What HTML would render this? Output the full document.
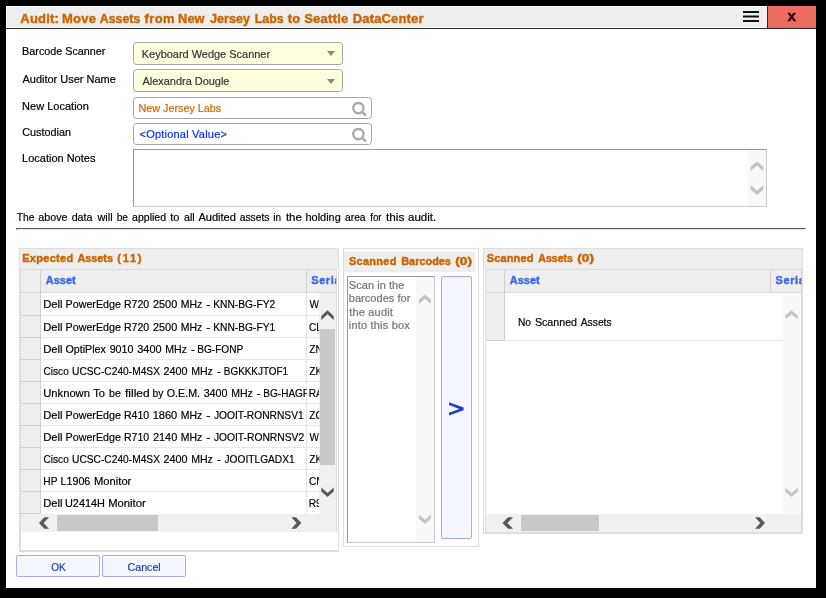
<!DOCTYPE html>
<html><head><meta charset="utf-8"><title>Audit</title>
<style>
html,body{margin:0;padding:0;background:#000;}
body{width:826px;height:598px;position:relative;overflow:hidden;font-family:'Liberation Sans', sans-serif;}
.t{position:absolute;white-space:pre;line-height:16px;height:16px;font-family:'Liberation Sans', sans-serif;}
.a{position:absolute;box-sizing:border-box;}
</style></head><body>
<div class="a" style="left:6px;top:6px;width:810px;height:582px;background:#fff;"></div>
<div class="a" style="left:7px;top:7px;width:760px;height:20px;background:#eeeeee;"></div>
<div class="a" style="left:6px;top:28px;width:810px;height:1px;background:#2a2a2a;"></div>
<div class="a" style="left:767px;top:6px;width:1px;height:23px;background:#2a2a2a;"></div>
<div class="a" style="left:768px;top:6px;width:48px;height:22px;background:#ed6c61;"></div>
<svg class="a" style="left:743px;top:10px" width="17" height="13" viewBox="0 0 17 13"><rect x="0" y="1" width="16" height="2" fill="#111"/><rect x="0" y="5.5" width="16" height="2" fill="#111"/><rect x="0" y="10" width="16" height="2" fill="#111"/></svg>
<div class="a" style="left:133px;top:42px;width:210px;height:23px;background:#ffffdf;border:1px solid #a6a6a6;border-radius:3.5px;"></div>
<svg class="a" style="left:327px;top:51px" width="8" height="5" viewBox="0 0 8 5"><path d="M0 0H8L4 5Z" fill="#888"/></svg>
<div class="a" style="left:133px;top:69px;width:210px;height:23px;background:#ffffdf;border:1px solid #a6a6a6;border-radius:3.5px;"></div>
<svg class="a" style="left:327px;top:79px" width="8" height="5" viewBox="0 0 8 5"><path d="M0 0H8L4 5Z" fill="#888"/></svg>
<div class="a" style="left:133px;top:97px;width:239px;height:22px;background:#fff;border:1px solid #a6a6a6;border-radius:3.5px;"></div>
<svg class="a" style="left:351px;top:102px" width="17" height="16" viewBox="0 0 17 16"><circle cx="7.4" cy="6.1" r="5.15" fill="none" stroke="#aaa" stroke-width="2.4"/><path d="M11.3 10.1L14.3 12.8" stroke="#aaa" stroke-width="2.5" stroke-linecap="round"/></svg>
<div class="a" style="left:133px;top:123px;width:239px;height:22px;background:#fff;border:1px solid #a6a6a6;border-radius:3.5px;"></div>
<svg class="a" style="left:351px;top:128px" width="17" height="16" viewBox="0 0 17 16"><circle cx="7.4" cy="6.1" r="5.15" fill="none" stroke="#aaa" stroke-width="2.4"/><path d="M11.3 10.1L14.3 12.8" stroke="#aaa" stroke-width="2.5" stroke-linecap="round"/></svg>
<div class="a" style="left:133px;top:149px;width:634px;height:58px;background:#fff;border:1px solid #ccc;border-top-color:#999;border-left-color:#999;"></div>
<div class="a" style="left:748px;top:150px;width:18px;height:56px;background:#f8f8f8;"></div>
<svg class="a" style="left:749px;top:160px" width="16" height="12" viewBox="0 0 16 12"><path d="M1.70 6.78L8.00 1.40L14.30 6.78L14.30 11.00L8.00 5.62L1.70 11.00Z" fill="#c2c2c2"/></svg>
<svg class="a" style="left:749px;top:184px" width="16" height="12" viewBox="0 0 16 12"><path d="M1.70 5.47L8.00 10.90L14.30 5.47L14.30 1.20L8.00 6.63L1.70 1.20Z" fill="#c2c2c2"/></svg>
<div class="a" style="left:16px;top:228px;width:790px;height:2px;border-top:1px solid #5a5a5a;border-left:1px solid #5a5a5a;border-bottom:1px solid #e6e6e6;border-right:1px solid #e6e6e6;"></div>
<div class="a" style="left:19px;top:248px;width:320px;height:304px;background:#fff;border:1px solid #ddd;border-left-width:2px;border-bottom-width:2px;"></div>
<div class="a" style="left:20px;top:249px;width:318px;height:20px;background:#eeeeee;"></div>
<div class="a" style="left:21px;top:269px;width:315px;height:24px;background:#eeeeee;"></div>
<div class="a" style="left:336px;top:269px;width:1px;height:263px;background:#ddd;"></div>
<div class="a" style="left:21px;top:269px;width:315px;height:1px;background:#dadada;"></div>
<div class="a" style="left:21px;top:292px;width:315px;height:1px;background:#dadada;"></div>
<div class="a" style="left:40px;top:270px;width:1px;height:23px;background:#d0d0d0;"></div>
<div class="a" style="left:306px;top:270px;width:1px;height:23px;background:#d0d0d0;"></div>
<div class="a" style="left:21px;top:293px;width:19px;height:221px;background:#eeeeee;"></div>
<div class="a" style="left:40px;top:293px;width:1px;height:221px;background:#d0d0d0;"></div>
<div class="a" style="left:306px;top:293px;width:1px;height:221px;background:#e4e4e4;"></div>
<div class="a" style="left:41px;top:315px;width:278px;height:1px;background:#e8e8e8;"></div>
<div class="a" style="left:21px;top:315px;width:20px;height:1px;background:#d0d0d0;"></div>
<div class="a" style="left:41px;top:337px;width:278px;height:1px;background:#e8e8e8;"></div>
<div class="a" style="left:21px;top:337px;width:20px;height:1px;background:#d0d0d0;"></div>
<div class="a" style="left:41px;top:359px;width:278px;height:1px;background:#e8e8e8;"></div>
<div class="a" style="left:21px;top:359px;width:20px;height:1px;background:#d0d0d0;"></div>
<div class="a" style="left:41px;top:381px;width:278px;height:1px;background:#e8e8e8;"></div>
<div class="a" style="left:21px;top:381px;width:20px;height:1px;background:#d0d0d0;"></div>
<div class="a" style="left:41px;top:403px;width:278px;height:1px;background:#e8e8e8;"></div>
<div class="a" style="left:21px;top:403px;width:20px;height:1px;background:#d0d0d0;"></div>
<div class="a" style="left:41px;top:425px;width:278px;height:1px;background:#e8e8e8;"></div>
<div class="a" style="left:21px;top:425px;width:20px;height:1px;background:#d0d0d0;"></div>
<div class="a" style="left:41px;top:447px;width:278px;height:1px;background:#e8e8e8;"></div>
<div class="a" style="left:21px;top:447px;width:20px;height:1px;background:#d0d0d0;"></div>
<div class="a" style="left:41px;top:469px;width:278px;height:1px;background:#e8e8e8;"></div>
<div class="a" style="left:21px;top:469px;width:20px;height:1px;background:#d0d0d0;"></div>
<div class="a" style="left:41px;top:491px;width:278px;height:1px;background:#e8e8e8;"></div>
<div class="a" style="left:21px;top:491px;width:20px;height:1px;background:#d0d0d0;"></div>
<div class="a" style="left:21px;top:513px;width:20px;height:1px;background:#d0d0d0;"></div>
<div class="a" style="left:319px;top:293px;width:17px;height:221px;background:#f0f0f0;"></div>
<div class="a" style="left:320px;top:329px;width:15px;height:136px;background:#c8c8c8;"></div>
<svg class="a" style="left:320px;top:309px" width="15" height="12" viewBox="0 0 15 12"><path d="M1.30 6.93L7.50 1.30L13.70 6.93L13.70 11.00L7.50 5.37L1.30 11.00Z" fill="#5a5a5a"/></svg>
<svg class="a" style="left:320px;top:486px" width="15" height="13" viewBox="0 0 15 13"><path d="M1.30 5.47L7.50 11.10L13.70 5.47L13.70 1.40L7.50 7.03L1.30 1.40Z" fill="#5a5a5a"/></svg>
<div class="a" style="left:21px;top:514px;width:315px;height:18px;background:#f0f0f0;"></div>
<div class="a" style="left:57px;top:515px;width:101px;height:16px;background:#c8c8c8;"></div>
<svg class="a" style="left:38px;top:516px" width="12" height="14" viewBox="0 0 12 14"><path d="M11.00 1.20L6.30 1.20L1.00 7.00L6.30 12.80L11.00 12.80L5.70 7.00Z" fill="#595959"/></svg>
<svg class="a" style="left:290px;top:516px" width="13" height="14" viewBox="0 0 13 14"><path d="M1.30 1.20L6.00 1.20L11.30 7.00L6.00 12.80L1.30 12.80L6.60 7.00Z" fill="#595959"/></svg>
<div class="a" style="left:343px;top:248px;width:136px;height:299px;background:#fff;border:1px solid #ddd;"></div>
<div class="a" style="left:344px;top:252px;width:131px;height:20px;background:#eeeeee;"></div>
<div class="a" style="left:347px;top:276px;width:88px;height:267px;background:#fff;border:1px solid #ccc;border-top-color:#9a9a9a;border-left-color:#9a9a9a;"></div>
<div class="a" style="left:416px;top:277px;width:18px;height:265px;background:#f8f8f8;"></div>
<svg class="a" style="left:417px;top:293px" width="15" height="12" viewBox="0 0 15 12"><path d="M1.90 6.82L7.95 1.50L14.00 6.82L14.00 11.00L7.95 5.68L1.90 11.00Z" fill="#c4c4c4"/></svg>
<svg class="a" style="left:417px;top:513px" width="15" height="12" viewBox="0 0 15 12"><path d="M1.90 5.68L7.95 11.00L14.00 5.68L14.00 1.50L7.95 6.82L1.90 1.50Z" fill="#c4c4c4"/></svg>
<div class="a" style="left:441px;top:276px;width:31px;height:263px;background:#f4f7ff;border:1px solid #a8a8ff;border-radius:2px;"></div>
<svg class="a" style="left:446px;top:399px" width="20" height="20" viewBox="0 0 20 20"><path d="M3 3.2L17.6 8.6V11.2L3 16.6V13.7L13.4 9.9L3 6.1Z" fill="#2040c0"/></svg>
<div class="a" style="left:483px;top:248px;width:320px;height:286px;background:#fff;border:1px solid #ddd;border-bottom-width:2px;"></div>
<div class="a" style="left:484px;top:249px;width:318px;height:20px;background:#eeeeee;"></div>
<div class="a" style="left:486px;top:269px;width:315px;height:24px;background:#eeeeee;"></div>
<div class="a" style="left:485px;top:269px;width:1px;height:264px;background:#ddd;"></div>
<div class="a" style="left:801px;top:269px;width:1px;height:264px;background:#ddd;"></div>
<div class="a" style="left:486px;top:269px;width:315px;height:1px;background:#dadada;"></div>
<div class="a" style="left:486px;top:292px;width:315px;height:1px;background:#dadada;"></div>
<div class="a" style="left:504px;top:270px;width:1px;height:23px;background:#d0d0d0;"></div>
<div class="a" style="left:770px;top:270px;width:1px;height:23px;background:#d0d0d0;"></div>
<div class="a" style="left:486px;top:293px;width:18px;height:47px;background:#eeeeee;"></div>
<div class="a" style="left:504px;top:293px;width:1px;height:48px;background:#d0d0d0;"></div>
<div class="a" style="left:505px;top:340px;width:278px;height:1px;background:#e8e8e8;"></div>
<div class="a" style="left:486px;top:340px;width:19px;height:1px;background:#d0d0d0;"></div>
<div class="a" style="left:783px;top:293px;width:18px;height:221px;background:#f8f8f8;"></div>
<svg class="a" style="left:784px;top:309px" width="15" height="12" viewBox="0 0 15 12"><path d="M1.30 6.51L7.50 1.30L13.70 6.51L13.70 10.60L7.50 5.39L1.30 10.60Z" fill="#c4c4c4"/></svg>
<svg class="a" style="left:784px;top:486px" width="15" height="12" viewBox="0 0 15 12"><path d="M1.30 5.85L7.50 11.00L13.70 5.85L13.70 1.80L7.50 6.95L1.30 1.80Z" fill="#c4c4c4"/></svg>
<div class="a" style="left:486px;top:514px;width:315px;height:18px;background:#f0f0f0;"></div>
<div class="a" style="left:521px;top:515px;width:78px;height:16px;background:#c8c8c8;"></div>
<svg class="a" style="left:501px;top:516px" width="13" height="14" viewBox="0 0 13 14"><path d="M12.00 1.20L7.07 1.20L1.50 7.00L7.07 12.80L12.00 12.80L6.43 7.00Z" fill="#595959"/></svg>
<svg class="a" style="left:754px;top:516px" width="12" height="14" viewBox="0 0 12 14"><path d="M1.00 1.20L5.70 1.20L11.00 7.00L5.70 12.80L1.00 12.80L6.30 7.00Z" fill="#595959"/></svg>
<div class="a" style="left:16px;top:555px;width:84px;height:22px;background:#f4f7ff;border:1px solid #a8a8ff;border-radius:2px;"></div>
<div class="a" style="left:102px;top:555px;width:84px;height:22px;background:#f4f7ff;border:1px solid #a8a8ff;border-radius:2px;"></div>
<div style="position:absolute;left:0;top:0;width:826px;height:598px;will-change:transform">
<div class="t" style="left:0;top:11px;font-size:13px;color:#cc6600;letter-spacing:0.220px;font-weight:bold;-webkit-text-stroke:0.45px #cc6600;transform:translateX(20.30px);transform-origin:0 0;">Audit:</div>
<div class="t" style="left:0;top:11px;font-size:13px;color:#cc6600;letter-spacing:0.267px;font-weight:bold;-webkit-text-stroke:0.45px #cc6600;transform:translateX(62.00px);transform-origin:0 0;">Move</div>
<div class="t" style="left:0;top:11px;font-size:13px;color:#cc6600;font-weight:bold;-webkit-text-stroke:0.45px #cc6600;transform:translateX(99.80px) scaleX(0.9506);transform-origin:0 0;">Assets</div>
<div class="t" style="left:0;top:11px;font-size:13px;color:#cc6600;letter-spacing:0.350px;font-weight:bold;-webkit-text-stroke:0.45px #cc6600;transform:translateX(144.60px);transform-origin:0 0;">from</div>
<div class="t" style="left:0;top:11px;font-size:13px;color:#cc6600;font-weight:bold;-webkit-text-stroke:0.45px #cc6600;transform:translateX(178.11px) scaleX(0.9887);transform-origin:0 0;">New</div>
<div class="t" style="left:0;top:11px;font-size:13px;color:#cc6600;font-weight:bold;-webkit-text-stroke:0.45px #cc6600;transform:translateX(209.90px) scaleX(0.9735);transform-origin:0 0;">Jersey</div>
<div class="t" style="left:0;top:11px;font-size:13px;color:#cc6600;font-weight:bold;-webkit-text-stroke:0.45px #cc6600;transform:translateX(254.83px) scaleX(0.9458);transform-origin:0 0;">Labs</div>
<div class="t" style="left:0;top:11px;font-size:13px;color:#cc6600;font-weight:bold;-webkit-text-stroke:0.45px #cc6600;transform:translateX(287.80px) scaleX(1.0000);transform-origin:0 0;">to</div>
<div class="t" style="left:0;top:11px;font-size:13px;color:#cc6600;letter-spacing:0.250px;font-weight:bold;-webkit-text-stroke:0.45px #cc6600;transform:translateX(304.20px);transform-origin:0 0;">Seattle</div>
<div class="t" style="left:0;top:11px;font-size:13px;color:#cc6600;letter-spacing:0.144px;font-weight:bold;-webkit-text-stroke:0.45px #cc6600;transform:translateX(352.80px);transform-origin:0 0;">DataCenter</div>
<div class="t" style="left:0;top:43px;font-size:11px;color:#000;-webkit-text-stroke:0.2px #000;transform:translateX(22.12px) scaleX(0.9792);transform-origin:0 0;">Barcode Scanner</div>
<div class="t" style="left:0;top:71px;font-size:11px;color:#000;-webkit-text-stroke:0.2px #000;transform:translateX(22.50px) scaleX(0.9973);transform-origin:0 0;">Auditor User Name</div>
<div class="t" style="left:0;top:98px;font-size:11px;color:#000;letter-spacing:0.009px;-webkit-text-stroke:0.2px #000;transform:translateX(22.10px);transform-origin:0 0;">New Location</div>
<div class="t" style="left:0;top:124px;font-size:11px;color:#000;-webkit-text-stroke:0.2px #000;transform:translateX(22.21px) scaleX(0.9856);transform-origin:0 0;">Custodian</div>
<div class="t" style="left:0;top:150px;font-size:11px;color:#000;-webkit-text-stroke:0.2px #000;transform:translateX(22.10px) scaleX(0.9986);transform-origin:0 0;">Location Notes</div>
<div class="t" style="left:0;top:209px;font-size:11px;color:#000;-webkit-text-stroke:0.2px #000;transform:translateX(16.70px) scaleX(0.9351);transform-origin:0 0;">The</div>
<div class="t" style="left:0;top:209px;font-size:11px;color:#000;-webkit-text-stroke:0.2px #000;transform:translateX(38.36px) scaleX(0.9729);transform-origin:0 0;">above</div>
<div class="t" style="left:0;top:209px;font-size:11px;color:#000;-webkit-text-stroke:0.2px #000;transform:translateX(71.66px) scaleX(0.9741);transform-origin:0 0;">data</div>
<div class="t" style="left:0;top:209px;font-size:11px;color:#000;-webkit-text-stroke:0.2px #000;transform:translateX(97.45px) scaleX(0.9933);transform-origin:0 0;">will</div>
<div class="t" style="left:0;top:209px;font-size:11px;color:#000;-webkit-text-stroke:0.2px #000;transform:translateX(116.64px) scaleX(0.9217);transform-origin:0 0;">be</div>
<div class="t" style="left:0;top:209px;font-size:11px;color:#000;-webkit-text-stroke:0.2px #000;transform:translateX(132.06px) scaleX(0.9583);transform-origin:0 0;">applied</div>
<div class="t" style="left:0;top:209px;font-size:11px;color:#000;-webkit-text-stroke:0.2px #000;transform:translateX(170.30px) scaleX(1.0000);transform-origin:0 0;">to</div>
<div class="t" style="left:0;top:209px;font-size:11px;color:#000;-webkit-text-stroke:0.2px #000;transform:translateX(183.96px) scaleX(0.9756);transform-origin:0 0;">all</div>
<div class="t" style="left:0;top:209px;font-size:11px;color:#000;-webkit-text-stroke:0.2px #000;transform:translateX(198.40px) scaleX(1.0041);transform-origin:0 0;">Audited</div>
<div class="t" style="left:0;top:209px;font-size:11px;color:#000;-webkit-text-stroke:0.2px #000;transform:translateX(239.67px) scaleX(0.9376);transform-origin:0 0;">assets</div>
<div class="t" style="left:0;top:209px;font-size:11px;color:#000;-webkit-text-stroke:0.2px #000;transform:translateX(273.35px) scaleX(0.9067);transform-origin:0 0;">in</div>
<div class="t" style="left:0;top:209px;font-size:11px;color:#000;-webkit-text-stroke:0.2px #000;transform:translateX(285.90px) scaleX(1.0400);transform-origin:0 0;">the</div>
<div class="t" style="left:0;top:209px;font-size:11px;color:#000;-webkit-text-stroke:0.2px #000;transform:translateX(305.50px) scaleX(0.9942);transform-origin:0 0;">holding</div>
<div class="t" style="left:0;top:209px;font-size:11px;color:#000;-webkit-text-stroke:0.2px #000;transform:translateX(344.97px) scaleX(0.9364);transform-origin:0 0;">area</div>
<div class="t" style="left:0;top:209px;font-size:11px;color:#000;-webkit-text-stroke:0.2px #000;transform:translateX(370.20px) scaleX(0.8863);transform-origin:0 0;">for</div>
<div class="t" style="left:0;top:209px;font-size:11px;color:#000;-webkit-text-stroke:0.2px #000;transform:translateX(386.00px) scaleX(1.0706);transform-origin:0 0;">this</div>
<div class="t" style="left:0;top:209px;font-size:11px;color:#000;-webkit-text-stroke:0.2px #000;transform:translateX(408.04px) scaleX(1.0447);transform-origin:0 0;">audit.</div>
<div class="t" style="left:0;top:46px;font-size:11px;color:#333;-webkit-text-stroke:0.2px #333;transform:translateX(141.75px) scaleX(0.9961);transform-origin:0 0;">Keyboard Wedge Scanner</div>
<div class="t" style="left:0;top:73px;font-size:11px;color:#333;-webkit-text-stroke:0.2px #333;transform:translateX(142.50px) scaleX(0.9943);transform-origin:0 0;">Alexandra Dougle</div>
<div class="t" style="left:0;top:100px;font-size:11px;color:#cc6600;-webkit-text-stroke:0.2px #cc6600;transform:translateX(138.57px) scaleX(0.9784);transform-origin:0 0;">New Jersey Labs</div>
<div class="t" style="left:0;top:126px;font-size:11px;color:#0533ff;letter-spacing:0.217px;-webkit-text-stroke:0.2px #0533ff;transform:translateX(139.50px);transform-origin:0 0;">&lt;Optional Value&gt;</div>
<div class="t" style="left:0;top:250px;font-size:11px;color:#cc6600;letter-spacing:0.286px;font-weight:bold;-webkit-text-stroke:0.45px #cc6600;transform:translateX(22.20px);transform-origin:0 0;">Expected</div>
<div class="t" style="left:0;top:250px;font-size:11px;color:#cc6600;font-weight:bold;-webkit-text-stroke:0.45px #cc6600;transform:translateX(77.40px) scaleX(0.9861);transform-origin:0 0;">Assets</div>
<div class="t" style="left:0;top:250px;font-size:11px;color:#cc6600;letter-spacing:1.700px;font-weight:bold;-webkit-text-stroke:0.45px #cc6600;transform:translateX(117.35px);transform-origin:0 0;">(11)</div>
<div class="t" style="left:0;top:253px;font-size:11px;color:#cc6600;letter-spacing:0.283px;font-weight:bold;-webkit-text-stroke:0.45px #cc6600;transform:translateX(348.90px);transform-origin:0 0;">Scanned</div>
<div class="t" style="left:0;top:253px;font-size:11px;color:#cc6600;font-weight:bold;-webkit-text-stroke:0.45px #cc6600;transform:translateX(401.20px) scaleX(0.9919);transform-origin:0 0;">Barcodes</div>
<div class="t" style="left:0;top:253px;font-size:11px;color:#cc6600;font-weight:bold;-webkit-text-stroke:0.45px #cc6600;transform:translateX(455.19px) scaleX(1.2462);transform-origin:0 0;">(0)</div>
<div class="t" style="left:0;top:250px;font-size:11px;color:#cc6600;letter-spacing:0.133px;font-weight:bold;-webkit-text-stroke:0.45px #cc6600;transform:translateX(486.80px);transform-origin:0 0;">Scanned</div>
<div class="t" style="left:0;top:250px;font-size:11px;color:#cc6600;font-weight:bold;-webkit-text-stroke:0.45px #cc6600;transform:translateX(538.30px) scaleX(0.9611);transform-origin:0 0;">Assets</div>
<div class="t" style="left:0;top:250px;font-size:11px;color:#cc6600;font-weight:bold;-webkit-text-stroke:0.45px #cc6600;transform:translateX(577.29px) scaleX(1.2385);transform-origin:0 0;">(0)</div>
<div class="t" style="left:0;top:272px;font-size:11px;color:#4169e1;font-weight:bold;-webkit-text-stroke:0.45px #4169e1;transform:translateX(45.80px) scaleX(0.9950);transform-origin:0 0;">Asset</div>
<div class="t" style="left:0;top:272px;font-size:11px;color:#4169e1;font-weight:bold;-webkit-text-stroke:0.45px #4169e1;transform:translateX(509.80px) scaleX(0.9950);transform-origin:0 0;">Asset</div>
<div class="t" style="left:0;top:272px;font-size:11px;color:#4169e1;letter-spacing:0.601px;font-weight:bold;-webkit-text-stroke:0.45px #4169e1;transform:translateX(311.20px);transform-origin:0 0;width:24.80px;overflow:hidden;">Serial</div>
<div class="t" style="left:0;top:272px;font-size:11px;color:#4169e1;letter-spacing:0.601px;font-weight:bold;-webkit-text-stroke:0.45px #4169e1;transform:translateX(775.50px);transform-origin:0 0;width:25.50px;overflow:hidden;">Serial</div>
<div class="t" style="left:0;top:296px;font-size:11px;color:#000;-webkit-text-stroke:0.2px #000;transform:translateX(43.24px) scaleX(1.0197);transform-origin:0 0;">Dell</div>
<div class="t" style="left:0;top:296px;font-size:11px;color:#000;-webkit-text-stroke:0.2px #000;transform:translateX(65.57px) scaleX(0.9740);transform-origin:0 0;">PowerEdge</div>
<div class="t" style="left:0;top:296px;font-size:11px;color:#000;-webkit-text-stroke:0.2px #000;transform:translateX(123.88px) scaleX(0.9624);transform-origin:0 0;">R720</div>
<div class="t" style="left:0;top:296px;font-size:11px;color:#000;-webkit-text-stroke:0.2px #000;transform:translateX(152.90px) scaleX(0.9937);transform-origin:0 0;">2500</div>
<div class="t" style="left:0;top:296px;font-size:11px;color:#000;-webkit-text-stroke:0.2px #000;transform:translateX(180.68px) scaleX(0.9535);transform-origin:0 0;">MHz</div>
<div class="t" style="left:0;top:296px;font-size:11px;color:#000;-webkit-text-stroke:0.2px #000;transform:translateX(206.22px) scaleX(1.1333);transform-origin:0 0;">-</div>
<div class="t" style="left:0;top:296px;font-size:11px;color:#000;-webkit-text-stroke:0.2px #000;transform:translateX(213.20px) scaleX(0.9298);transform-origin:0 0;">KNN-BG-FY2</div>
<div class="t" style="left:0;top:296px;font-size:11px;color:#000;-webkit-text-stroke:0.2px #000;transform:translateX(309.50px) scaleX(0.9200);transform-origin:0 0;width:10.33px;overflow:hidden;">W1</div>
<div class="t" style="left:0;top:319px;font-size:11px;color:#000;-webkit-text-stroke:0.2px #000;transform:translateX(43.24px) scaleX(1.0197);transform-origin:0 0;">Dell</div>
<div class="t" style="left:0;top:319px;font-size:11px;color:#000;-webkit-text-stroke:0.2px #000;transform:translateX(65.57px) scaleX(0.9740);transform-origin:0 0;">PowerEdge</div>
<div class="t" style="left:0;top:319px;font-size:11px;color:#000;-webkit-text-stroke:0.2px #000;transform:translateX(123.88px) scaleX(0.9624);transform-origin:0 0;">R720</div>
<div class="t" style="left:0;top:319px;font-size:11px;color:#000;-webkit-text-stroke:0.2px #000;transform:translateX(152.90px) scaleX(0.9937);transform-origin:0 0;">2500</div>
<div class="t" style="left:0;top:319px;font-size:11px;color:#000;-webkit-text-stroke:0.2px #000;transform:translateX(180.68px) scaleX(0.9535);transform-origin:0 0;">MHz</div>
<div class="t" style="left:0;top:319px;font-size:11px;color:#000;-webkit-text-stroke:0.2px #000;transform:translateX(206.22px) scaleX(1.1333);transform-origin:0 0;">-</div>
<div class="t" style="left:0;top:319px;font-size:11px;color:#000;-webkit-text-stroke:0.2px #000;transform:translateX(213.20px) scaleX(0.9298);transform-origin:0 0;">KNN-BG-FY1</div>
<div class="t" style="left:0;top:319px;font-size:11px;color:#000;-webkit-text-stroke:0.2px #000;transform:translateX(309.04px) scaleX(0.9200);transform-origin:0 0;width:10.83px;overflow:hidden;">CL</div>
<div class="t" style="left:0;top:341px;font-size:11px;color:#000;-webkit-text-stroke:0.2px #000;transform:translateX(43.24px) scaleX(1.0197);transform-origin:0 0;">Dell</div>
<div class="t" style="left:0;top:341px;font-size:11px;color:#000;-webkit-text-stroke:0.2px #000;transform:translateX(65.46px) scaleX(0.9721);transform-origin:0 0;">OptiPlex</div>
<div class="t" style="left:0;top:341px;font-size:11px;color:#000;-webkit-text-stroke:0.2px #000;transform:translateX(109.66px) scaleX(0.9708);transform-origin:0 0;">9010</div>
<div class="t" style="left:0;top:341px;font-size:11px;color:#000;-webkit-text-stroke:0.2px #000;transform:translateX(137.25px) scaleX(0.9917);transform-origin:0 0;">3400</div>
<div class="t" style="left:0;top:341px;font-size:11px;color:#000;-webkit-text-stroke:0.2px #000;transform:translateX(165.28px) scaleX(0.9581);transform-origin:0 0;">MHz</div>
<div class="t" style="left:0;top:341px;font-size:11px;color:#000;-webkit-text-stroke:0.2px #000;transform:translateX(191.03px) scaleX(1.0667);transform-origin:0 0;">-</div>
<div class="t" style="left:0;top:341px;font-size:11px;color:#000;-webkit-text-stroke:0.2px #000;transform:translateX(197.21px) scaleX(0.9184);transform-origin:0 0;">BG-FONP</div>
<div class="t" style="left:0;top:341px;font-size:11px;color:#000;-webkit-text-stroke:0.2px #000;transform:translateX(309.27px) scaleX(0.9200);transform-origin:0 0;width:10.58px;overflow:hidden;">ZN</div>
<div class="t" style="left:0;top:363px;font-size:11px;color:#000;-webkit-text-stroke:0.2px #000;transform:translateX(43.54px) scaleX(0.9159);transform-origin:0 0;">Cisco</div>
<div class="t" style="left:0;top:363px;font-size:11px;color:#000;-webkit-text-stroke:0.2px #000;transform:translateX(72.00px) scaleX(0.9287);transform-origin:0 0;">UCSC-C240-M4SX</div>
<div class="t" style="left:0;top:363px;font-size:11px;color:#000;-webkit-text-stroke:0.2px #000;transform:translateX(163.51px) scaleX(0.9811);transform-origin:0 0;">2400</div>
<div class="t" style="left:0;top:363px;font-size:11px;color:#000;-webkit-text-stroke:0.2px #000;transform:translateX(191.18px) scaleX(0.9581);transform-origin:0 0;">MHz</div>
<div class="t" style="left:0;top:363px;font-size:11px;color:#000;-webkit-text-stroke:0.2px #000;transform:translateX(217.03px) scaleX(1.0667);transform-origin:0 0;">-</div>
<div class="t" style="left:0;top:363px;font-size:11px;color:#000;-webkit-text-stroke:0.2px #000;transform:translateX(223.82px) scaleX(0.9011);transform-origin:0 0;">BGKKKJTOF1</div>
<div class="t" style="left:0;top:363px;font-size:11px;color:#000;-webkit-text-stroke:0.2px #000;transform:translateX(309.27px) scaleX(0.9200);transform-origin:0 0;width:10.58px;overflow:hidden;">ZK</div>
<div class="t" style="left:0;top:385px;font-size:11px;color:#000;-webkit-text-stroke:0.2px #000;transform:translateX(43.24px) scaleX(1.0180);transform-origin:0 0;">Unknown</div>
<div class="t" style="left:0;top:385px;font-size:11px;color:#000;-webkit-text-stroke:0.2px #000;transform:translateX(93.30px) scaleX(1.0133);transform-origin:0 0;">To</div>
<div class="t" style="left:0;top:385px;font-size:11px;color:#000;-webkit-text-stroke:0.2px #000;transform:translateX(109.02px) scaleX(0.9652);transform-origin:0 0;">be</div>
<div class="t" style="left:0;top:385px;font-size:11px;color:#000;-webkit-text-stroke:0.2px #000;transform:translateX(125.00px) scaleX(1.0864);transform-origin:0 0;">filled</div>
<div class="t" style="left:0;top:385px;font-size:11px;color:#000;-webkit-text-stroke:0.2px #000;transform:translateX(152.53px) scaleX(0.9333);transform-origin:0 0;">by</div>
<div class="t" style="left:0;top:385px;font-size:11px;color:#000;-webkit-text-stroke:0.2px #000;transform:translateX(166.76px) scaleX(0.9714);transform-origin:0 0;">O.E.M.</div>
<div class="t" style="left:0;top:385px;font-size:11px;color:#000;-webkit-text-stroke:0.2px #000;transform:translateX(203.66px) scaleX(0.9750);transform-origin:0 0;">3400</div>
<div class="t" style="left:0;top:385px;font-size:11px;color:#000;-webkit-text-stroke:0.2px #000;transform:translateX(231.18px) scaleX(0.9581);transform-origin:0 0;">MHz</div>
<div class="t" style="left:0;top:385px;font-size:11px;color:#000;-webkit-text-stroke:0.2px #000;transform:translateX(256.62px) scaleX(1.1333);transform-origin:0 0;">-</div>
<div class="t" style="left:0;top:385px;font-size:11px;color:#000;-webkit-text-stroke:0.2px #000;transform:translateX(263.32px) scaleX(0.9119);transform-origin:0 0;">BG-HAG</div>
<div class="t" style="left:0;top:385px;font-size:11px;color:#000;-webkit-text-stroke:0.2px #000;transform:translateX(302.77px) scaleX(0.9772);transform-origin:0 0;width:3.72px;overflow:hidden;">RID</div>
<div class="t" style="left:0;top:385px;font-size:11px;color:#000;-webkit-text-stroke:0.2px #000;transform:translateX(308.81px) scaleX(0.9200);transform-origin:0 0;width:11.08px;overflow:hidden;">RA</div>
<div class="t" style="left:0;top:407px;font-size:11px;color:#000;-webkit-text-stroke:0.2px #000;transform:translateX(43.24px) scaleX(1.0197);transform-origin:0 0;">Dell</div>
<div class="t" style="left:0;top:407px;font-size:11px;color:#000;-webkit-text-stroke:0.2px #000;transform:translateX(65.57px) scaleX(0.9740);transform-origin:0 0;">PowerEdge</div>
<div class="t" style="left:0;top:407px;font-size:11px;color:#000;-webkit-text-stroke:0.2px #000;transform:translateX(123.88px) scaleX(0.9624);transform-origin:0 0;">R410</div>
<div class="t" style="left:0;top:407px;font-size:11px;color:#000;-webkit-text-stroke:0.2px #000;transform:translateX(152.65px) scaleX(1.0043);transform-origin:0 0;">1860</div>
<div class="t" style="left:0;top:407px;font-size:11px;color:#000;-webkit-text-stroke:0.2px #000;transform:translateX(180.68px) scaleX(0.9535);transform-origin:0 0;">MHz</div>
<div class="t" style="left:0;top:407px;font-size:11px;color:#000;-webkit-text-stroke:0.2px #000;transform:translateX(206.22px) scaleX(1.1333);transform-origin:0 0;">-</div>
<div class="t" style="left:0;top:407px;font-size:11px;color:#000;-webkit-text-stroke:0.2px #000;transform:translateX(213.90px) scaleX(0.9299);transform-origin:0 0;">JOOIT-RONRNSV1</div>
<div class="t" style="left:0;top:407px;font-size:11px;color:#000;-webkit-text-stroke:0.2px #000;transform:translateX(309.27px) scaleX(0.9200);transform-origin:0 0;width:10.58px;overflow:hidden;">ZC</div>
<div class="t" style="left:0;top:429px;font-size:11px;color:#000;-webkit-text-stroke:0.2px #000;transform:translateX(43.24px) scaleX(1.0197);transform-origin:0 0;">Dell</div>
<div class="t" style="left:0;top:429px;font-size:11px;color:#000;-webkit-text-stroke:0.2px #000;transform:translateX(65.57px) scaleX(0.9740);transform-origin:0 0;">PowerEdge</div>
<div class="t" style="left:0;top:429px;font-size:11px;color:#000;-webkit-text-stroke:0.2px #000;transform:translateX(123.88px) scaleX(0.9624);transform-origin:0 0;">R710</div>
<div class="t" style="left:0;top:429px;font-size:11px;color:#000;-webkit-text-stroke:0.2px #000;transform:translateX(152.90px) scaleX(0.9937);transform-origin:0 0;">2140</div>
<div class="t" style="left:0;top:429px;font-size:11px;color:#000;-webkit-text-stroke:0.2px #000;transform:translateX(180.68px) scaleX(0.9535);transform-origin:0 0;">MHz</div>
<div class="t" style="left:0;top:429px;font-size:11px;color:#000;-webkit-text-stroke:0.2px #000;transform:translateX(206.22px) scaleX(1.1333);transform-origin:0 0;">-</div>
<div class="t" style="left:0;top:429px;font-size:11px;color:#000;-webkit-text-stroke:0.2px #000;transform:translateX(213.90px) scaleX(0.9340);transform-origin:0 0;">JOOIT-RONRNSV2</div>
<div class="t" style="left:0;top:429px;font-size:11px;color:#000;-webkit-text-stroke:0.2px #000;transform:translateX(309.50px) scaleX(0.9200);transform-origin:0 0;width:10.33px;overflow:hidden;">W1</div>
<div class="t" style="left:0;top:451px;font-size:11px;color:#000;-webkit-text-stroke:0.2px #000;transform:translateX(43.54px) scaleX(0.9159);transform-origin:0 0;">Cisco</div>
<div class="t" style="left:0;top:451px;font-size:11px;color:#000;-webkit-text-stroke:0.2px #000;transform:translateX(72.00px) scaleX(0.9287);transform-origin:0 0;">UCSC-C240-M4SX</div>
<div class="t" style="left:0;top:451px;font-size:11px;color:#000;-webkit-text-stroke:0.2px #000;transform:translateX(163.51px) scaleX(0.9811);transform-origin:0 0;">2400</div>
<div class="t" style="left:0;top:451px;font-size:11px;color:#000;-webkit-text-stroke:0.2px #000;transform:translateX(191.18px) scaleX(0.9581);transform-origin:0 0;">MHz</div>
<div class="t" style="left:0;top:451px;font-size:11px;color:#000;-webkit-text-stroke:0.2px #000;transform:translateX(217.03px) scaleX(1.0667);transform-origin:0 0;">-</div>
<div class="t" style="left:0;top:451px;font-size:11px;color:#000;-webkit-text-stroke:0.2px #000;transform:translateX(224.50px) scaleX(0.9258);transform-origin:0 0;">JOOITLGADX1</div>
<div class="t" style="left:0;top:451px;font-size:11px;color:#000;-webkit-text-stroke:0.2px #000;transform:translateX(309.27px) scaleX(0.9200);transform-origin:0 0;width:10.58px;overflow:hidden;">ZK</div>
<div class="t" style="left:0;top:473px;font-size:11px;color:#000;-webkit-text-stroke:0.2px #000;transform:translateX(43.31px) scaleX(0.9214);transform-origin:0 0;">HP</div>
<div class="t" style="left:0;top:473px;font-size:11px;color:#000;-webkit-text-stroke:0.2px #000;transform:translateX(60.47px) scaleX(0.9763);transform-origin:0 0;">L1906</div>
<div class="t" style="left:0;top:473px;font-size:11px;color:#000;-webkit-text-stroke:0.2px #000;transform:translateX(94.04px) scaleX(1.0167);transform-origin:0 0;">Monitor</div>
<div class="t" style="left:0;top:473px;font-size:11px;color:#000;-webkit-text-stroke:0.2px #000;transform:translateX(309.04px) scaleX(0.9200);transform-origin:0 0;width:10.83px;overflow:hidden;">CN</div>
<div class="t" style="left:0;top:495px;font-size:11px;color:#000;-webkit-text-stroke:0.2px #000;transform:translateX(43.24px) scaleX(1.0197);transform-origin:0 0;">Dell</div>
<div class="t" style="left:0;top:495px;font-size:11px;color:#000;-webkit-text-stroke:0.2px #000;transform:translateX(64.96px) scaleX(0.9923);transform-origin:0 0;">U2414H</div>
<div class="t" style="left:0;top:495px;font-size:11px;color:#000;-webkit-text-stroke:0.2px #000;transform:translateX(108.23px) scaleX(1.0222);transform-origin:0 0;">Monitor</div>
<div class="t" style="left:0;top:495px;font-size:11px;color:#000;-webkit-text-stroke:0.2px #000;transform:translateX(308.81px) scaleX(0.9200);transform-origin:0 0;width:11.08px;overflow:hidden;">R9</div>
<div class="t" style="left:0;top:314px;font-size:11px;color:#000;-webkit-text-stroke:0.2px #000;transform:translateX(517.90px) scaleX(0.9308);transform-origin:0 0;">No</div>
<div class="t" style="left:0;top:314px;font-size:11px;color:#000;-webkit-text-stroke:0.2px #000;transform:translateX(534.92px) scaleX(0.9694);transform-origin:0 0;">Scanned</div>
<div class="t" style="left:0;top:314px;font-size:11px;color:#000;-webkit-text-stroke:0.2px #000;transform:translateX(580.70px) scaleX(0.9374);transform-origin:0 0;">Assets</div>
<div class="t" style="left:0;top:277px;font-size:11px;color:#727272;letter-spacing:0.045px;-webkit-text-stroke:0.2px #727272;transform:translateX(348.80px);transform-origin:0 0;">Scan in the</div>
<div class="t" style="left:0;top:290px;font-size:11px;color:#727272;letter-spacing:0.041px;-webkit-text-stroke:0.2px #727272;transform:translateX(348.80px);transform-origin:0 0;">barcodes for</div>
<div class="t" style="left:0;top:304px;font-size:11px;color:#727272;letter-spacing:0.169px;-webkit-text-stroke:0.2px #727272;transform:translateX(349.30px);transform-origin:0 0;">the audit</div>
<div class="t" style="left:0;top:317px;font-size:11px;color:#727272;letter-spacing:0.188px;-webkit-text-stroke:0.2px #727272;transform:translateX(348.80px);transform-origin:0 0;">into this box</div>
<div class="t" style="left:0;top:559px;font-size:11px;color:#1f3db4;-webkit-text-stroke:0.2px #1f3db4;transform:translateX(51.17px) scaleX(0.9143);transform-origin:0 0;">OK</div>
<div class="t" style="left:0;top:559px;font-size:11px;color:#1f3db4;-webkit-text-stroke:0.2px #1f3db4;transform:translateX(127.52px) scaleX(0.9684);transform-origin:0 0;">Cancel</div>
<div class="t" style="left:0;top:8px;font-size:15px;color:#2a0505;font-weight:bold;-webkit-text-stroke:0.45px #2a0505;transform:translateX(787.55px) scaleX(1.0057);transform-origin:0 0;">x</div>
</div>
</body></html>
